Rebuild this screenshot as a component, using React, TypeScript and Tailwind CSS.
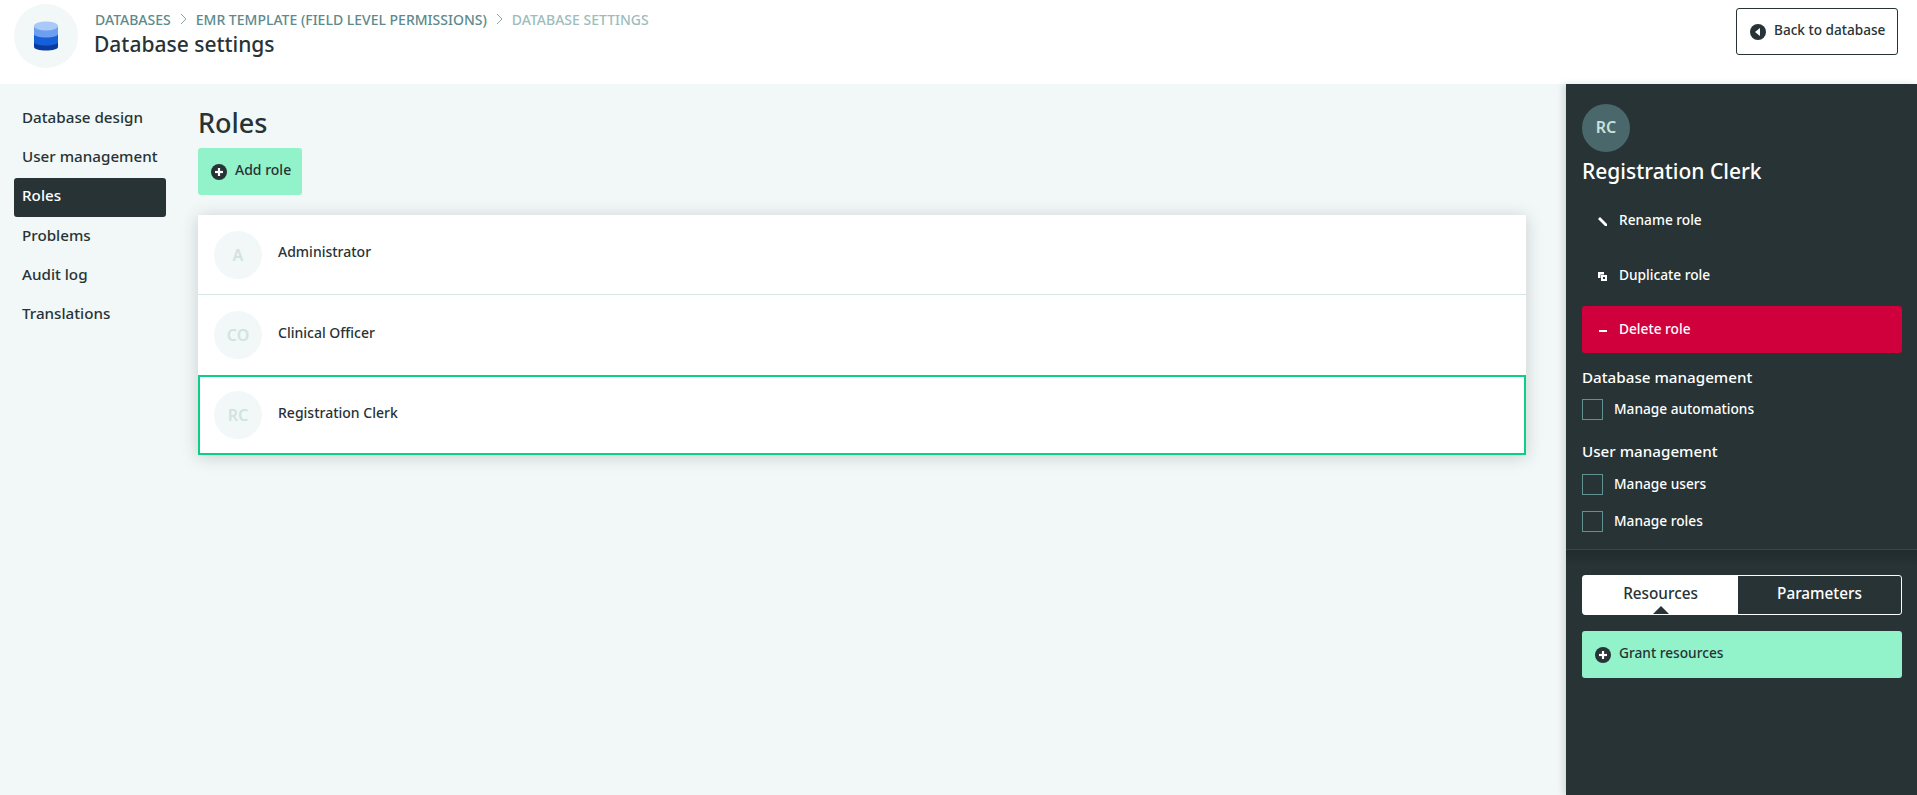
import React from 'react';

const NAV = ['Database design', 'User management', 'Roles', 'Problems', 'Audit log', 'Translations'];
const ROLES = [
  { initials: 'A', name: 'Administrator' },
  { initials: 'CO', name: 'Clinical Officer' },
  { initials: 'RC', name: 'Registration Clerk' },
];

const PlusCircle: React.FC = () => (
  <svg width="16" height="16" viewBox="0 0 16 16" className="shrink-0">
    <circle cx="8" cy="8" r="8" fill="#273335" />
    <rect x="6.9" y="4" width="2.2" height="8" fill="#fff" />
    <rect x="4" y="6.9" width="8" height="2.2" fill="#fff" />
  </svg>
);

const Chevron: React.FC = () => (
  <svg width="7" height="12" viewBox="0 0 7 12" className="mx-[9px] shrink-0">
    <path d="M1 1l5 5-5 5" fill="none" stroke="#8aa9aa" strokeWidth="1" />
  </svg>
);

const DatabaseIcon: React.FC = () => (
  <svg width="24" height="30" viewBox="0 0 24 30">
    <path d="M0 21v5c0 2 5.4 3.5 12 3.5S24 28 24 26v-5z" fill="#0b3a9e" />
    <path d="M0 13v8c0 2 5.4 3.5 12 3.5S24 23 24 21v-8z" fill="#1560d8" />
    <path d="M0 5v8c0 2 5.4 3.5 12 3.5S24 15 24 13V5z" fill="#6d9ff0" />
    <ellipse cx="12" cy="5" rx="12" ry="4.5" fill="#aac8f8" />
  </svg>
);

const Checkbox: React.FC<{ label: string }> = ({ label }) => (
  <label className="flex items-center gap-[11px] h-[21px] text-[13.7px] font-medium text-white">
    <span className="w-[21px] h-[21px] border border-[#5f9291] shrink-0" />
    <span className="-mt-px">{label}</span>
  </label>
);

export default function App() {
  return (
    <div className="h-[795px] flex flex-col overflow-hidden bg-[#f2f7f7] text-[#273335] font-['Noto_Sans',sans-serif]">
      <header className="h-[84px] shrink-0 bg-white flex items-start justify-between pl-[14px] pr-[19px]">
        <div className="flex items-start gap-[16px] pt-1">
          <div className="w-16 h-16 rounded-full bg-[#f2f7f7] flex items-center justify-center">
            <DatabaseIcon />
          </div>
          <div>
            <div className="flex items-center h-[24px] mt-[3px] ml-px text-[14px] font-medium uppercase text-[#5d8a8c] whitespace-nowrap">
              <span>Databases</span>
              <Chevron />
              <span>EMR Template (Field Level Permissions)</span>
              <Chevron />
              <span className="text-[#9dbcbc]">Database settings</span>
            </div>
            <h1 className="text-[21px] leading-[26px] font-medium">Database settings</h1>
          </div>
        </div>
        <button className="mt-2 w-[162px] h-[47px] border border-[#273335] rounded-[3px] flex items-center pl-[13px] pb-[2px] gap-[8px] text-[13.6px] font-medium whitespace-nowrap">
          <svg width="16" height="16" viewBox="0 0 16 16" className="shrink-0 mt-[2px]">
            <circle cx="8" cy="8" r="8" fill="#273335" />
            <path d="M10 4v8L5 8z" fill="#fff" />
          </svg>
          Back to database
        </button>
      </header>

      <div className="flex-1 flex min-h-0">
        <nav className="w-[184px] shrink-0 pt-[15px] pl-[14px] pr-[18px]">
          {NAV.map(item => (
            <div
              key={item}
              className={`h-[39.3px] px-2 pb-[3px] flex items-center rounded-[3px] text-[15.2px] font-medium ${item === 'Roles' ? 'bg-[#273335] text-white' : ''}`}
            >
              {item}
            </div>
          ))}
        </nav>

        <main className="flex-1 min-w-0 pl-[14px] pr-[40px]">
          <h2 className="text-[27px] leading-[36px] font-medium mt-[21px]">Roles</h2>
          <button className="mt-[7px] w-[104px] h-[47px] bg-[#92f2c9] rounded-[3px] flex items-center pl-[13px] gap-[8px] text-[14px] font-medium">
            <PlusCircle />
            <span className="-mt-[5px]">Add role</span>
          </button>
          <div className="mt-5 bg-white shadow-[0_2px_16px_rgba(39,51,53,0.2)]">
            {ROLES.map((role, i) => (
              <div
                key={role.name}
                className={`h-20 flex items-center pl-4 gap-4 text-[14px] font-medium ${i === 2 ? 'border-2 border-[#0ccf86] pl-[14px]' : ''} ${i === 0 ? 'border-b border-[#d5e6e3]' : ''}`}
              >
                <div className="w-12 h-12 rounded-full bg-[#f2f7f7] flex items-center justify-center text-[#d0e4dd] text-[16px] font-semibold">
                  {role.initials}
                </div>
                <span className="-mt-[6px]">{role.name}</span>
              </div>
            ))}
          </div>
        </main>

        <aside className="w-[351px] shrink-0 bg-[#273335] text-white shadow-[-3px_0_6px_rgba(39,51,53,0.15)]">
          <div className="pl-4 pr-[15px] pt-5 h-[466px] border-b border-[#34474a]">
            <div className="w-12 h-12 pb-[2px] rounded-full bg-[#4a686b] flex items-center justify-center text-[#c6e2dc] text-[16px] font-semibold">
              RC
            </div>
            <h3 className="text-[21px] leading-[30px] font-medium mt-[4px]">Registration Clerk</h3>
            <div className="mt-[11px] h-[47px] flex items-center pl-[16px] gap-[12px] text-[13.7px] font-medium">
              <svg width="9" height="9" viewBox="0 0 9 9" className="shrink-0 mt-[2px]">
                <path d="M0 2 2 0 9 7 9 9 7 9z" fill="#fff" />
              </svg>
              Rename role
            </div>
            <div className="mt-2 h-[47px] flex items-center pl-[16px] gap-[12px] text-[13.7px] font-medium">
              <svg width="9" height="9" viewBox="0 0 9 9" className="shrink-0 mt-[2px]">
                <path d="M0 0h6v2.5H2.5V6H0zM3 3h6v6H3zM5 5v2h2V5z" fill="#fff" fillRule="evenodd" />
              </svg>
              Duplicate role
            </div>
            <div className="mt-[7px] h-[47px] rounded-[3px] bg-[#d0003c] flex items-center pl-[17px] gap-[12px] text-[13.7px] font-medium">
              <span className="w-2 h-0.5 bg-white shrink-0 mt-[3px]" />
              Delete role
            </div>
            <h4 className="mt-[13px] text-[15.2px] leading-[22px] font-medium">Database management</h4>
            <div className="mt-[11px]">
              <Checkbox label="Manage automations" />
            </div>
            <h4 className="mt-[20px] text-[15.2px] leading-[22px] font-medium">User management</h4>
            <div className="mt-[12px] flex flex-col gap-4">
              <Checkbox label="Manage users" />
              <Checkbox label="Manage roles" />
            </div>
          </div>
          <div className="pl-4 pr-[15px] pt-[25px] bg-[linear-gradient(#1f2b2c,#273335_16px)]">
            <div className="flex h-10 rounded-[3px] border border-white text-[15.3px] font-medium">
              <div className="relative w-[155px] pb-[3px] bg-white text-[#273335] flex items-center justify-center">
                Resources
                <span className="absolute bottom-0 left-[70px] w-0 h-0 border-x-[8px] border-x-transparent border-b-[8px] border-b-[#273335]" />
              </div>
              <div className="flex-1 pb-[3px] flex items-center justify-center">Parameters</div>
            </div>
            <div className="mt-4 h-[47px] rounded-[3px] bg-[#92f2c9] text-[#273335] flex items-center pl-[13px] gap-[8px] text-[13.7px] font-medium">
              <PlusCircle />
              <span className="-mt-[3px]">Grant resources</span>
            </div>
          </div>
        </aside>
      </div>
    </div>
  );
}
